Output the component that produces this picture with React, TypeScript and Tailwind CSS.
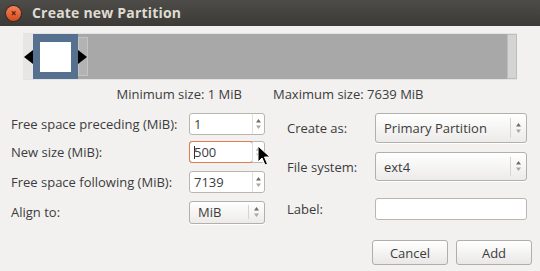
import React from "react";

const font = { fontFamily: '"Open Sans", "DejaVu Sans", sans-serif' };

function Arrows() {
  return (
    <svg width="7" height="12" viewBox="0 0 7 12" className="shrink-0">
      <path d="M3.5 1 L6 4.5 H1 Z" fill="#6d6b66" />
      <path d="M3.5 11 L6 7.5 H1 Z" fill="#a9a7a2" />
    </svg>
  );
}

function SpinField({ value, focused = false }: { value: string; focused?: boolean }) {
  return (
    <div className="flex h-[22px] w-[76px] items-stretch rounded-[3px] border border-[#b9b6b0] bg-white">
      <div
        className={
          "flex flex-1 items-center pl-[4px] " +
          (focused ? "-m-px rounded-[3px] border border-[#e07a4f]" : "")
        }
      >
        {focused && <span className="mr-[-1px] h-[13px] w-px bg-[#333]" />}
        <span>{value}</span>
      </div>
      <div className="flex w-[12px] items-center justify-center border-l border-[#e3e1dd]">
        <Arrows />
      </div>
    </div>
  );
}

function Combo({ value, w, h }: { value: string; w: string; h: string }) {
  return (
    <div
      className={
        "flex items-center rounded-[3px] border border-[#b3b0aa] bg-gradient-to-b from-white to-[#ecebe9] shadow-[0_1px_0_#fff] " +
        w +
        " " +
        h
      }
    >
      <span className="flex-1 pl-[8px]">{value}</span>
      <div className="flex h-[70%] w-[16px] items-center justify-center border-l border-[#d6d4cf]">
        <Arrows />
      </div>
    </div>
  );
}

function Button({ label }: { label: string }) {
  return (
    <button className="flex h-[25px] w-[76px] items-center justify-center rounded-[3px] border border-[#b1aea8] bg-gradient-to-b from-white to-[#e9e8e6] text-[#3c3c3c]">
      {label}
    </button>
  );
}

export default function App() {
  return (
    <div
      className="relative flex h-[271px] w-[540px] flex-col overflow-hidden bg-[#f2f1f0] text-[13px] leading-[16px] text-[#3c3c3c]"
      style={font}
    >
      <div className="flex h-[26px] shrink-0 items-center gap-[11px] bg-gradient-to-b from-[#4d4c48] to-[#3b3a36] px-[6px]">
        <div className="flex h-[15px] w-[15px] items-center justify-center rounded-full bg-gradient-to-b from-[#f3825a] to-[#d9491c] shadow-[0_0_0_1px_#3a2a20]">
          <span className="text-[10px] leading-none font-bold text-[#5a1d08]">×</span>
        </div>
        <span className="text-[14px] font-bold tracking-[0.2px] text-[#dfdbd2]">Create new Partition</span>
      </div>

      <div className="px-[23px] pt-[7px]">
        <div className="flex h-[47px] border-y border-[#e4e3e1] bg-[#a8a8a8]">
          <div className="flex w-[10px] items-center bg-[#e7e6e4]">
            <svg width="10" height="14" viewBox="0 0 10 14">
              <path d="M1 7 L10 0 V14 Z" fill="#000" />
            </svg>
          </div>
          <div className="flex w-[45px] items-center justify-center bg-[#56708f]">
            <div className="h-[30px] w-[31px] bg-white" />
          </div>
          <div className="relative flex w-[10px] items-center">
            <div className="absolute inset-y-[3px] inset-x-0 border border-[#c4c4c4] bg-[#b3b3b3]" />
            <svg width="10" height="14" viewBox="0 0 10 14" className="relative">
              <path d="M0 0 L9 7 L0 14 Z" fill="#000" />
            </svg>
          </div>
          <div className="flex-1" />
          <div className="w-[10px] border border-[#bdbdbd] bg-[#d4d4d4]" />
        </div>
      </div>

      <div className="mt-[6px] flex justify-center gap-[31px]">
        <span>Minimum size: 1 MiB</span>
        <span>Maximum size: 7639 MiB</span>
      </div>

      <div className="mt-[11px] flex">
        <div className="ml-[11px] flex w-[254px] flex-col">
          <div className="flex h-[22px] items-center justify-between">
            <span>Free space preceding (MiB):</span>
            <SpinField value="1" />
          </div>
          <div className="mt-[6px] flex h-[22px] items-center justify-between">
            <span>New size (MiB):</span>
            <SpinField value="500" focused />
          </div>
          <div className="mt-[8px] flex h-[22px] items-center justify-between">
            <span>Free space following (MiB):</span>
            <SpinField value="7139" />
          </div>
          <div className="mt-[8px] flex h-[22px] items-center justify-between">
            <span>Align to:</span>
            <Combo value="MiB" w="w-[76px]" h="h-[23px]" />
          </div>
        </div>

        <div className="ml-[22px] flex w-[240px] flex-col">
          <div className="flex h-[30px] items-center justify-between">
            <span>Create as:</span>
            <Combo value="Primary Partition" w="w-[152px]" h="h-[30px]" />
          </div>
          <div className="mt-[9px] flex h-[29px] items-center justify-between">
            <span>File system:</span>
            <Combo value="ext4" w="w-[152px]" h="h-[29px]" />
          </div>
          <div className="mt-[17px] flex h-[22px] items-center justify-between">
            <span>Label:</span>
            <div className="h-[22px] w-[152px] rounded-[3px] border border-[#b9b6b0] bg-white" />
          </div>
          <div className="mt-[20px] -mr-[5px] flex justify-end gap-[8px]">
            <Button label="Cancel" />
            <Button label="Add" />
          </div>
        </div>
      </div>

      <svg
        width="14"
        height="21"
        viewBox="0 0 14 21"
        className="absolute left-[257px] top-[145px]"
      >
        <path
          d="M1 1 V17 L5 13 L8 20 L10.5 19 L7.5 12 H13 Z"
          fill="#000"
          stroke="#fff"
          strokeWidth="1"
          strokeLinejoin="round"
        />
      </svg>
    </div>
  );
}
